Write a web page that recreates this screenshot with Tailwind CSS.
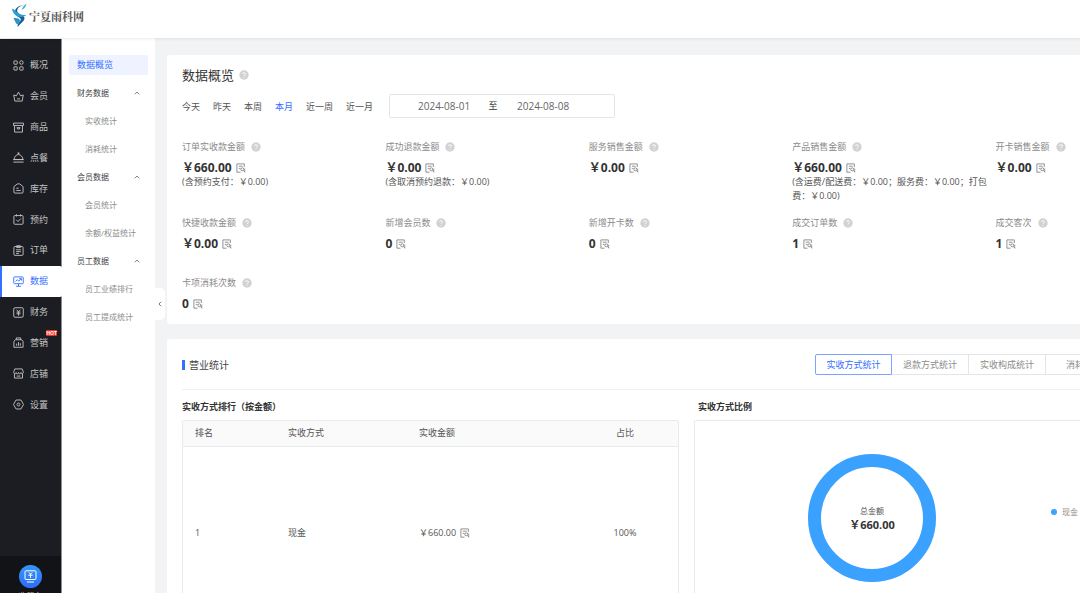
<!DOCTYPE html>
<html lang="zh-CN">
<head>
<meta charset="utf-8">
<meta name="viewport" content="width=device-width, initial-scale=1">
<title>数据概览</title>
<script src="https://cdn.jsdelivr.net/npm/@tailwindcss/browser@4"></script>
</head>
<body class="flex h-screen flex-col overflow-hidden bg-[#f2f3f5] font-['Open_Sans','Noto_Sans_CJK_SC',sans-serif] text-[9px] leading-[14px] text-[#555]">
<svg class="hidden" xmlns="http://www.w3.org/2000/svg">
  <symbol id="help" viewBox="0 0 10 10"><circle cx="5" cy="5" r="4.7" fill="#d2d2d2"/><path d="M3.6 4a1.4 1.4 0 1 1 2 1.3c-.4.2-.6.4-.6.8M5 7v.8" fill="none" stroke="#fff" stroke-width=".9"/></symbol>
  <symbol id="doc" viewBox="0 0 10 10"><path d="M8.300 4V.9H.9v8.300h3.600M2.800 3.200h3.800M2.800 5.400h1.600" fill="none" stroke="#777" stroke-width=".8"/><circle cx="6.300" cy="6.300" r="1.500" fill="none" stroke="#777" stroke-width=".8"/><path d="M7.300 7.400l1.700 1.800M8.700 5.500v3.800" stroke="#777" stroke-width=".7"/></symbol>
</svg>

<header class="z-10 flex h-[38px] shrink-0 items-start bg-white pl-[11px] pt-[3px] shadow-[0_1px_3px_rgba(0,0,0,0.08)]">
  <a href="#" class="flex items-center">
    <svg class="h-[25px] w-[18px]" viewBox="0 0 18 25">
      <path d="M15.500 1C12 2 8 3 6.500 6.200c-1.200 2.800 1 4.300 3.600 5.600 2.800 1.400 4.300 2.900 2.800 5.500-1.500 2.400-4 3.600-6.200 6.700-.4-2.600.8-4.400 2.200-5.800 1.600-1.700 1.200-2.800-1-4C4.600 12.500 3 10.400 4.200 7.200 5.800 3.300 10.500 2.300 15.500 1z" fill="#155f93"/>
      <path d="M1 5.500c1.500.4 2.700 1.300 4.200 3 2.300 2.700 5.300 4 10.300 3.500-3.500 2.600-8.500 2.700-11.500-.2C2.200 10 1.300 8 1 5.500z" fill="#2f9fd2"/>
      <path d="M2.500 15.300c3-.6 5.800.2 6.500 2-.3 1.700-1.500 3.500-2.600 4.200-1.200-.3-2.200-3-3.900-6.200z" fill="#2a93c9"/>
      <path d="M15.500 1c-.6 2.500-1.800 4.600-4.800 5.700.8-2.500 2-4.400 4.800-5.700z" fill="#3fb0df"/>
    </svg>
    <span class="font-['Noto_Serif_CJK_SC','Liberation_Serif','Noto_Sans_CJK_SC',serif] text-[11px] font-bold leading-[16px] text-[#555]">宁夏雨科网</span>
  </a>
</header>

<div class="flex min-h-0 flex-1">
  <aside class="mt-px flex w-[62px] shrink-0 flex-col justify-between border-r border-[#8d8e91] bg-[#1b1d22] text-[#c3c4c6]">
    <nav class="mt-[11px] flex h-[370px] shrink-0 flex-col">
      <a href="#" class="flex flex-1 items-center gap-[6px] pl-[13px]"><svg class="size-[11px]" viewBox="0 0 12 12" fill="none" stroke="currentColor"><rect x="1" y="1" width="3.6" height="3.6" rx=".5"/><circle cx="9.2" cy="2.8" r="1.9"/><rect x="1" y="7.4" width="3.6" height="3.6" rx=".5"/><rect x="7.4" y="7.4" width="3.6" height="3.6" rx=".5"/></svg>概况</a>
      <a href="#" class="flex flex-1 items-center gap-[6px] pl-[13px]"><svg class="size-[11px]" viewBox="0 0 12 12" fill="none" stroke="currentColor"><path d="M2 11L.8 4.300l2.900 1L6 1.200l2.300 4.100 2.900-1L10 11zM4.300 8.600h3.400"/></svg>会员</a>
      <a href="#" class="flex flex-1 items-center gap-[6px] pl-[13px]"><svg class="size-[11px]" viewBox="0 0 12 12" fill="none" stroke="currentColor"><path d="M.6 1.200h10.800v2.600H.6zM1.700 4v7h8.600V4M4 6.200h4M4.800 6.400v1.200h2.400V6.400"/></svg>商品</a>
      <a href="#" class="flex flex-1 items-center gap-[6px] pl-[13px]"><svg class="size-[11px]" viewBox="0 0 12 12" fill="none" stroke="currentColor"><path d="M1.200 8.200C1.500 5 3.500 2.800 6 2.800s4.500 2.200 4.800 5.400zM.2 8.300h11.600M.4 11h11.200M6 1v1.600M4.800 1.100h2.400"/></svg>点餐</a>
      <a href="#" class="flex flex-1 items-center gap-[6px] pl-[13px]"><svg class="size-[11px]" viewBox="0 0 12 12" fill="none" stroke="currentColor"><path d="M1 4L4.600 1h2.800L11 4V9.800Q11 11 9.800 11H2.200Q1 11 1 9.800zM3.600 5.700h2.600M3.600 8.200h4.800"/></svg>库存</a>
      <a href="#" class="flex flex-1 items-center gap-[6px] pl-[13px]"><svg class="size-[11px]" viewBox="0 0 12 12" fill="none" stroke="currentColor"><rect x="1" y="1.700" width="10" height="9.500" rx="1"/><path d="M3.800.3v2.400M8.200.3v2.400M3.600 6.300l1.900 1.900 3.100-3.300"/></svg>预约</a>
      <a href="#" class="flex flex-1 items-center gap-[6px] pl-[13px]"><svg class="size-[11px]" viewBox="0 0 12 12" fill="none" stroke="currentColor"><rect x="1" y="1.700" width="10" height="9.600" rx="1"/><path d="M4 .8h4v2H4zM3.400 5.200h5.200M3.400 7.200h5.200M3.400 9.200h3"/></svg>订单</a>
      <a href="#" aria-current="page" class="-mr-px flex flex-1 items-center gap-[6px] rounded-r-[2px] border-l-2 border-[#3370ff] bg-white pl-[11px] text-[#3370ff]"><svg class="size-[11px]" viewBox="0 0 12 12" fill="none" stroke="currentColor"><rect x=".8" y="1" width="10.400" height="7.400" rx="1"/><path d="M2.800 6l2-2 1.500 1.500L9 3M6.800 2.900H9.200V5M6 8.500V11M3.200 11.200h5.600"/></svg>数据</a>
      <a href="#" class="flex flex-1 items-center gap-[6px] pl-[13px]"><svg class="size-[11px]" viewBox="0 0 12 12" fill="none" stroke="currentColor"><rect x=".8" y=".8" width="10.400" height="10.400" rx="1.500"/><path d="M4 3l2 2.400L8 3M3.800 5.600h4.400M3.800 7.400h4.400M6 5.400v4"/></svg>财务</a>
      <a href="#" class="relative flex flex-1 items-center gap-[6px] pl-[13px]"><svg class="size-[11px]" viewBox="0 0 12 12" fill="none" stroke="currentColor"><path d="M1 4.600L2.600 3h6.800L11 4.600V11.200H1zM3.600 3V1h4.800v2M4 9.500V7.200M6 9.500V5.600M8 9.500V6.800"/></svg>营销<span class="absolute right-[4px] top-[3px] w-[11px] rounded-[1px] bg-[#ee3124] text-center text-[5px] font-bold leading-[6px] text-white">HOT</span></a>
      <a href="#" class="flex flex-1 items-center gap-[6px] pl-[13px]"><svg class="size-[11px]" viewBox="0 0 12 12" fill="none" stroke="currentColor"><path d="M2 1h8l1.300 3.500c0 2.300-2.700 2.300-2.700.4 0 2-2.600 2-2.600 0 0 2-2.600 2-2.600 0 0 1.900-2.700 1.900-2.700-.4zM1.600 6.300V11h8.800V6.300M4 8.800h4"/></svg>店铺</a>
      <a href="#" class="flex flex-1 items-center gap-[6px] pl-[13px]"><svg class="size-[11px]" viewBox="0 0 12 12" fill="none" stroke="currentColor"><path d="M3.400 1.100h5.200L11.500 6l-2.900 4.900H3.400L.5 6z"/><circle cx="6" cy="6" r="1.600"/></svg>设置</a>
    </nav>
    <button type="button" class="flex h-[37px] shrink-0 flex-col items-center overflow-hidden bg-[#121316] pt-[9px] text-[#d9a9a0]">
      <span class="flex size-[23px] shrink-0 items-center justify-center rounded-full bg-linear-to-b from-[#3597fb] to-[#2f6bf7]"><svg class="size-[13px]" viewBox="0 0 13 13" fill="none" stroke="#fff"><rect x="1" y=".8" width="11" height="8.700" rx="1"/><path d="M5 2.500l1.500 1.800L8 2.500M4.300 5.200h4.400M6.500 4v4M3 12h7"/></svg></span>
      <span class="mt-[2px] shrink-0 text-[8px] leading-[11px]">收银台</span>
    </button>
  </aside>

  <nav class="w-[93px] shrink-0 bg-white pt-[13px] text-[8px] leading-[28px] text-[#8c8c8c]">
    <a href="#" aria-current="page" class="mx-[7px] mb-[4px] mt-[4px] block rounded-[2px] bg-[#eef3ff] pl-[8px] text-[9px] leading-[20px] text-[#3370ff]">数据概览</a>
    <button type="button" class="flex w-full items-center justify-between px-[15px] text-[#444]">财务数据<svg class="size-[6px]" viewBox="0 0 6 6" fill="none" stroke="#777" stroke-width=".9"><path d="M.8 4.300L3 2l2.200 2.300"/></svg></button>
    <a href="#" class="block pl-[23px]">实收统计</a>
    <a href="#" class="block pl-[23px]">消耗统计</a>
    <button type="button" class="flex w-full items-center justify-between px-[15px] text-[#444]">会员数据<svg class="size-[6px]" viewBox="0 0 6 6" fill="none" stroke="#777" stroke-width=".9"><path d="M.8 4.300L3 2l2.200 2.300"/></svg></button>
    <a href="#" class="block pl-[23px]">会员统计</a>
    <a href="#" class="block pl-[23px]">余额/权益统计</a>
    <button type="button" class="flex w-full items-center justify-between px-[15px] text-[#444]">员工数据<svg class="size-[6px]" viewBox="0 0 6 6" fill="none" stroke="#777" stroke-width=".9"><path d="M.8 4.300L3 2l2.200 2.300"/></svg></button>
    <a href="#" class="block pl-[23px]">员工业绩排行</a>
    <a href="#" class="block pl-[23px]">员工提成统计</a>
  </nav>

  <main class="relative flex min-w-0 flex-1 flex-col gap-[15px] overflow-hidden pl-[12px] pt-[17px]">
    <button type="button" aria-label="收起菜单" class="absolute left-0 top-[250px] flex h-[32px] w-[10px] items-center justify-center rounded-r-[5px] bg-white"><svg class="size-[6px]" viewBox="0 0 6 6" fill="none" stroke="#666" stroke-width=".9"><path d="M4 .8L2 3l2 2.200"/></svg></button>

    <section class="min-w-[1047px] shrink-0 rounded-[3px] bg-white px-[15px] pb-[13px] pt-[10px]">
      <h1 class="flex items-center gap-[5px] text-[13px] leading-[20px] text-[#333]">数据概览<svg class="size-[10px]"><use href="#help"/></svg></h1>
      <div class="mt-[9px] flex items-center text-[#555]">
        <div class="flex w-[207px] gap-[13px] pt-[2px]">
          <button type="button">今天</button><button type="button">昨天</button><button type="button">本周</button><button type="button" class="text-[#3370ff]">本月</button><button type="button">近一周</button><button type="button">近一月</button>
        </div>
        <div class="flex h-[24px] w-[226px] items-center rounded-[2px] border border-[#e3e5e8] pb-[1px] text-[10px]">
          <input aria-label="开始日期" value="2024-08-01" class="w-[95px] pl-[28px] text-[#666] outline-none">
          <span class="w-[16px] text-center text-[9px] text-[#333]">至</span>
          <input aria-label="结束日期" value="2024-08-08" class="w-[100px] pl-[16px] text-[#666] outline-none">
        </div>
      </div>

      <div class="mt-[22px] grid grid-cols-5">
        <div class="pr-[8px]"><h2 class="flex items-center gap-[6px] text-[#8c8c8c]">订单实收款金额<svg class="size-[10px]"><use href="#help"/></svg></h2><p class="mt-[7px] flex items-center gap-[4px] text-[12px] font-bold text-[#333]">￥660.00<svg class="size-[10px]"><use href="#doc"/></svg></p><p>(含预约支付：￥0.00)</p></div>
        <div class="pr-[8px]"><h2 class="flex items-center gap-[6px] text-[#8c8c8c]">成功退款金额<svg class="size-[10px]"><use href="#help"/></svg></h2><p class="mt-[7px] flex items-center gap-[4px] text-[12px] font-bold text-[#333]">￥0.00<svg class="size-[10px]"><use href="#doc"/></svg></p><p>(含取消预约退款：￥0.00)</p></div>
        <div class="pr-[8px]"><h2 class="flex items-center gap-[6px] text-[#8c8c8c]">服务销售金额<svg class="size-[10px]"><use href="#help"/></svg></h2><p class="mt-[7px] flex items-center gap-[4px] text-[12px] font-bold text-[#333]">￥0.00<svg class="size-[10px]"><use href="#doc"/></svg></p></div>
        <div class="pr-[6px]"><h2 class="flex items-center gap-[6px] text-[#8c8c8c]">产品销售金额<svg class="size-[10px]"><use href="#help"/></svg></h2><p class="mt-[7px] flex items-center gap-[4px] text-[12px] font-bold text-[#333]">￥660.00<svg class="size-[10px]"><use href="#doc"/></svg></p><p>(含运费/配送费：￥0.00；服务费：￥0.00；打包费：￥0.00)</p></div>
        <div class="pr-[8px]"><h2 class="flex items-center gap-[6px] text-[#8c8c8c]">开卡销售金额<svg class="size-[10px]"><use href="#help"/></svg></h2><p class="mt-[7px] flex items-center gap-[4px] text-[12px] font-bold text-[#333]">￥0.00<svg class="size-[10px]"><use href="#doc"/></svg></p></div>

        <div class="mt-[13px]"><h2 class="flex items-center gap-[6px] text-[#8c8c8c]">快捷收款金额<svg class="size-[10px]"><use href="#help"/></svg></h2><p class="mt-[7px] flex items-center gap-[4px] text-[12px] font-bold text-[#333]">￥0.00<svg class="size-[10px]"><use href="#doc"/></svg></p></div>
        <div class="mt-[13px]"><h2 class="flex items-center gap-[6px] text-[#8c8c8c]">新增会员数<svg class="size-[10px]"><use href="#help"/></svg></h2><p class="mt-[7px] flex items-center gap-[4px] text-[12px] font-bold text-[#333]">0<svg class="size-[10px]"><use href="#doc"/></svg></p></div>
        <div class="mt-[13px]"><h2 class="flex items-center gap-[6px] text-[#8c8c8c]">新增开卡数<svg class="size-[10px]"><use href="#help"/></svg></h2><p class="mt-[7px] flex items-center gap-[4px] text-[12px] font-bold text-[#333]">0<svg class="size-[10px]"><use href="#doc"/></svg></p></div>
        <div class="mt-[13px]"><h2 class="flex items-center gap-[6px] text-[#8c8c8c]">成交订单数<svg class="size-[10px]"><use href="#help"/></svg></h2><p class="mt-[7px] flex items-center gap-[4px] text-[12px] font-bold text-[#333]">1<svg class="size-[10px]"><use href="#doc"/></svg></p></div>
        <div class="mt-[13px]"><h2 class="flex items-center gap-[6px] text-[#8c8c8c]">成交客次<svg class="size-[10px]"><use href="#help"/></svg></h2><p class="mt-[7px] flex items-center gap-[4px] text-[12px] font-bold text-[#333]">1<svg class="size-[10px]"><use href="#doc"/></svg></p></div>

        <div class="mt-[25px]"><h2 class="flex items-center gap-[6px] text-[#8c8c8c]">卡项消耗次数<svg class="size-[10px]"><use href="#help"/></svg></h2><p class="mt-[7px] flex items-center gap-[4px] text-[12px] font-bold text-[#333]">0<svg class="size-[10px]"><use href="#doc"/></svg></p></div>
      </div>
    </section>

    <section class="min-w-[1047px] shrink-0 rounded-[3px] bg-white px-[15px] pt-[15px]">
      <div class="flex items-center border-b border-[#f0f1f3] pb-[14px]">
        <h2 class="flex w-[633px] items-center gap-[4px] text-[10px] text-[#444]"><span class="h-[10px] w-[3px] bg-[#3370ff]"></span>营业统计</h2>
        <div class="flex text-[#8c8c8c]">
          <button type="button" class="h-[21px] w-[77px] rounded-l-[2px] border border-[#7da2ff] text-[#3370ff]">实收方式统计</button>
          <button type="button" class="h-[21px] w-[77px] border border-l-0 border-[#e3e5e8]">退款方式统计</button>
          <button type="button" class="h-[21px] w-[77px] border border-l-0 border-[#e3e5e8]">实收构成统计</button>
          <button type="button" class="h-[21px] w-[77px] border border-l-0 border-[#e3e5e8]">消耗统计</button>
        </div>
      </div>
      <div class="flex gap-[15px] pt-[10px]">
        <div class="w-[497px] shrink-0">
          <h3 class="font-bold text-[#333]">实收方式排行（按金额）</h3>
          <div class="mt-[6px] rounded-[2px] border border-[#e8eaec]">
            <table class="w-full table-fixed text-left">
              <thead class="bg-[#fafafa]"><tr class="h-[25px] border-b border-[#e8eaec]"><th class="w-[93px] pl-[12px] font-normal">排名</th><th class="w-[131px] pl-[12px] font-normal">实收方式</th><th class="w-[165px] pl-[12px] font-normal">实收金额</th><th class="text-center font-normal">占比</th></tr></thead>
              <tbody><tr class="h-[173px]"><td class="pl-[12px]">1</td><td class="pl-[12px]">现金</td><td class="pl-[12px]"><span class="flex items-center gap-[4px]">￥660.00<svg class="size-[10px]"><use href="#doc"/></svg></span></td><td class="text-center">100%</td></tr></tbody>
            </table>
          </div>
        </div>
        <div class="flex-1">
          <h3 class="pl-[4px] font-bold text-[#333]">实收方式比例</h3>
          <div class="mt-[6px] flex h-[200px] items-start rounded-[2px] border border-[#e8eaec] pl-[113px] pt-[33px]">
            <div class="flex size-[128px] flex-col items-center justify-center rounded-full border-[13px] border-[#3ba1ff]"><span class="text-[8px]">总金额</span><strong class="text-[11px] text-[#333]">￥660.00</strong></div>
            <div class="ml-[115px] mt-[51px] flex items-center gap-[5px] text-[8px] text-[#8c8c8c]"><span class="size-[6px] rounded-full bg-[#3ba1ff]"></span>现金</div>
          </div>
        </div>
      </div>
    </section>
  </main>
</div>
</body>
</html>
